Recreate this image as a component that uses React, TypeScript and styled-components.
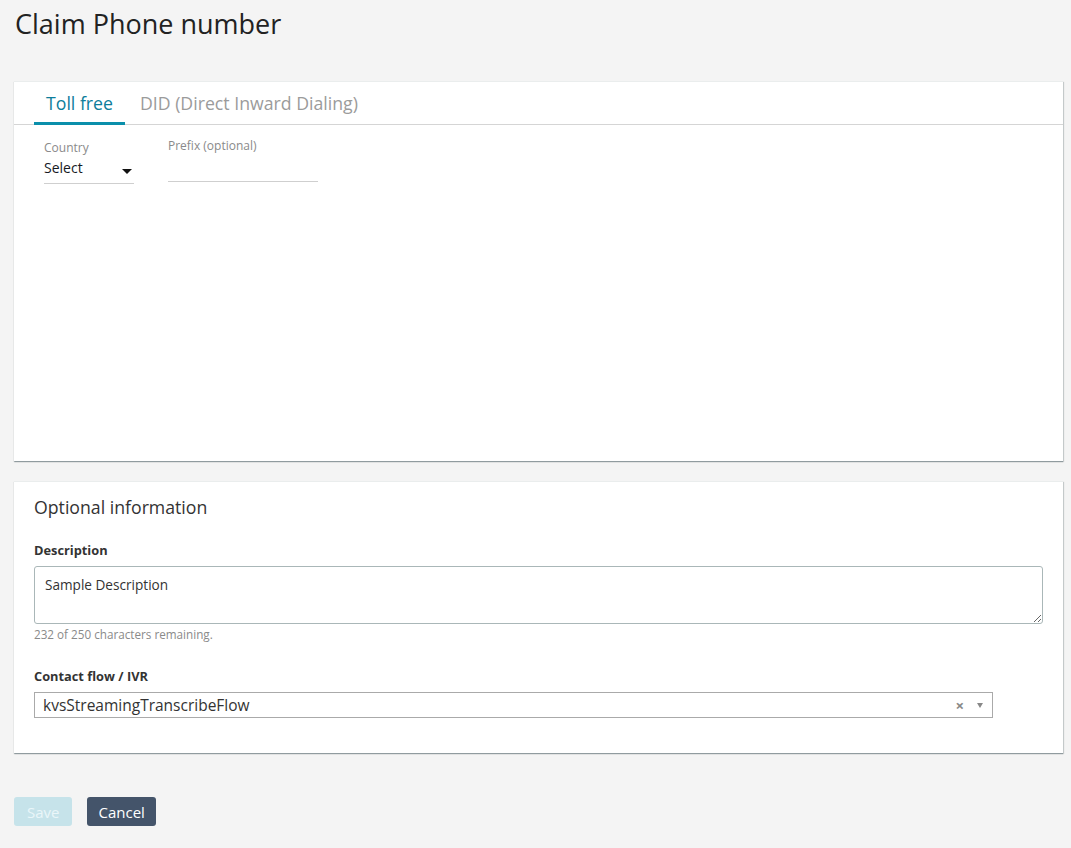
import React from "react";
import styled, { createGlobalStyle } from "styled-components";

const Global = createGlobalStyle`
  html, body { margin: 0; padding: 0; background: #f4f4f4; }
  body { font-family: "Open Sans", "Noto Sans", Arial, sans-serif; color: #16191f; }
  * { box-sizing: border-box; }
`;

const Page = styled.div`
  padding: 0 8px 22px 14px;
  min-height: 848px;
  display: flex;
  flex-direction: column;
`;

const Title = styled.h1`
  margin: 0;
  padding: 7px 0 0 1px;
  height: 81px;
  font-size: 27px;
  font-weight: 400;
  color: #222;
  line-height: 34px;
`;

const Card = styled.section<{ $h: number }>`
  background: #fff;
  height: ${(p) => p.$h}px;
  box-shadow: 0 1px 1px 0 rgba(0, 28, 36, 0.3), 1px 1px 1px 0 rgba(0, 28, 36, 0.15);
  border-top: 1px solid #eaeded;
`;

const TabBar = styled.div`
  display: flex;
  padding-left: 20px;
  border-bottom: 1px solid #d5d5d5;
  height: 43px;
  align-items: flex-end;
`;

const Tab = styled.div<{ $active?: boolean }>`
  padding: 1px 12px 0 12px;
  height: 42px;
  display: flex;
  align-items: center;
  font-size: 17.7px;
  margin-right: 3px;
  color: ${(p) => (p.$active ? "#0d7d9b" : "#9b9b9b")};
  border-bottom: 3px solid ${(p) => (p.$active ? "#0a8fab" : "transparent")};
  margin-bottom: -1px;
`;

const FieldRow = styled.div`
  display: flex;
  padding: 14px 0 0 30px;
  gap: 34px;
  align-items: flex-start;
`;

const Field = styled.div<{ $w: number; $top: number }>`
  width: ${(p) => p.$w}px;
  margin-top: ${(p) => p.$top}px;
  display: flex;
  flex-direction: column;
`;

const SmallLabel = styled.label`
  font-size: 12px;
  color: #8a8a8a;
  line-height: 16px;
`;

const LineInput = styled.div<{ $h: number }>`
  height: ${(p) => p.$h}px;
  border-bottom: 1px solid #cfcfcf;
  display: flex;
  align-items: flex-start;
  justify-content: space-between;
  font-size: 14px;
  line-height: 22px;
  padding-top: 1px;
  color: #16191f;
  padding-right: 2px;
`;

const Caret = styled.span`
  width: 0;
  height: 0;
  border-left: 5px solid transparent;
  border-right: 5px solid transparent;
  border-top: 5px solid #111;
  margin-top: 12px;
`;

const CardBody = styled.div`
  padding: 13px 20px 0 20px;
  display: flex;
  flex-direction: column;
`;

const SectionTitle = styled.h2`
  margin: 0 0 22px 0;
  font-size: 17.7px;
  font-weight: 400;
  color: #333;
  line-height: 24px;
`;

const BoldLabel = styled.div`
  font-size: 12.8px;
  font-weight: 700;
  color: #333;
  line-height: 18px;
  margin-bottom: 7px;
`;

const TextArea = styled.textarea`
  width: 1009px;
  height: 58px;
  border: 1px solid #aab7b8;
  border-radius: 3px;
  padding: 8px 10px;
  font-family: inherit;
  font-size: 13.6px;
  color: #333;
  resize: vertical;
  display: block;
  outline: none;
`;

const Hint = styled.div`
  font-size: 11.7px;
  color: #8a8a8a;
  margin-top: 3px;
  line-height: 15px;
  margin-bottom: 25px;
`;

const SelectBox = styled.div`
  width: 959px;
  height: 26px;
  border: 1px solid #aaa;
  display: flex;
  align-items: center;
  padding: 0 8px;
  font-size: 15.5px;
  color: #333;
`;

const SelectText = styled.span`
  flex: 1;
`;

const Clear = styled.span`
  color: #888;
  font-size: 15px;
  font-weight: 700;
  margin-right: 13px;
`;

const SmallCaret = styled.span`
  width: 0;
  height: 0;
  border-left: 3px solid transparent;
  border-right: 3px solid transparent;
  border-top: 5px solid #888;
  margin-right: 1px;
`;

const Gap = styled.div<{ $h: number }>`
  height: ${(p) => p.$h}px;
  flex-shrink: 0;
`;

const Buttons = styled.div`
  display: flex;
  gap: 15px;
`;

const Button = styled.button<{ $variant: "disabled" | "dark" }>`
  height: 29px;
  border: none;
  border-radius: 3px;
  font-family: inherit;
  font-size: 15px;
  line-height: 28px;
  padding: 0 ${(p) => (p.$variant === "dark" ? 11 : 13)}px;
  color: ${(p) => (p.$variant === "dark" ? "#fff" : "#eaf6f9")};
  background: ${(p) => (p.$variant === "dark" ? "#44546a" : "#c6e3ea")};
`;

export default function App() {
  return (
    <>
      <Global />
      <Page>
        <Title>Claim Phone number</Title>
        <Card $h={380}>
          <TabBar>
            <Tab $active>Toll free</Tab>
            <Tab>DID (Direct Inward Dialing)</Tab>
          </TabBar>
          <FieldRow>
            <Field $w={90} $top={1}>
              <SmallLabel>Country</SmallLabel>
              <LineInput $h={28}>
                Select
                <Caret />
              </LineInput>
            </Field>
            <Field $w={150} $top={-1}>
              <SmallLabel>Prefix (optional)</SmallLabel>
              <LineInput $h={28} />
            </Field>
          </FieldRow>
        </Card>
        <Gap $h={20} />
        <Card $h={272}>
          <CardBody>
            <SectionTitle>Optional information</SectionTitle>
            <BoldLabel>Description</BoldLabel>
            <TextArea defaultValue="Sample Description" />
            <Hint>232 of 250 characters remaining.</Hint>
            <BoldLabel>Contact flow / IVR</BoldLabel>
            <SelectBox>
              <SelectText>kvsStreamingTranscribeFlow</SelectText>
              <Clear>×</Clear>
              <SmallCaret />
            </SelectBox>
          </CardBody>
        </Card>
        <Gap $h={44} />
        <Buttons>
          <Button $variant="disabled">Save</Button>
          <Button $variant="dark">Cancel</Button>
        </Buttons>
      </Page>
    </>
  );
}
